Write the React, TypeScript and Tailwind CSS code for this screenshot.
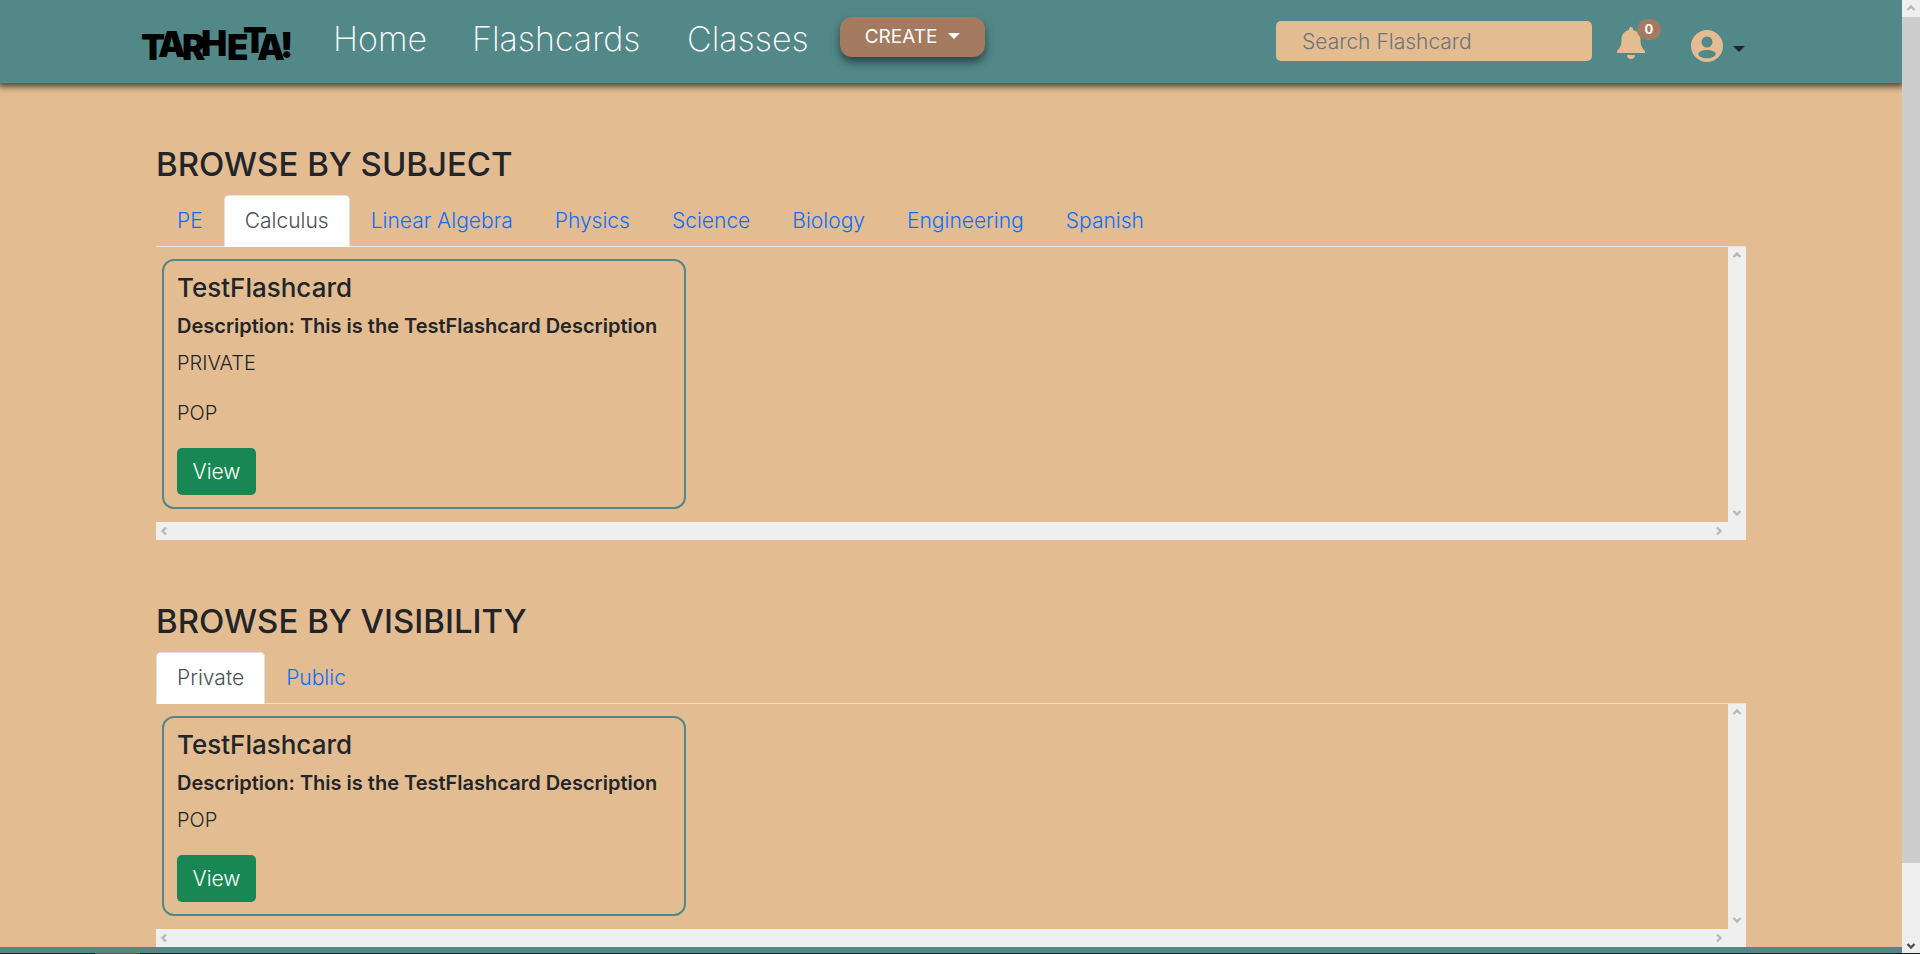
import type { ReactNode } from "react";

const chevrons = {
  up: "M1.5 6 5 2.5 8.5 6",
  down: "M1.5 3 5 6.5 8.5 3",
  left: "M6 1.5 2.5 5 6 8.5",
  right: "M3 1.5 6.5 5 3 8.5",
};

function Chevron({ dir, dark }: { dir: keyof typeof chevrons; dark?: boolean }) {
  return (
    <svg viewBox="0 0 10 10" className="size-[10px]" fill="none" stroke={dark ? "#505050" : "#b8b8b8"} strokeWidth="2.4">
      <path d={chevrons[dir]} />
    </svg>
  );
}

function Caret({ className }: { className: string }) {
  return (
    <svg viewBox="0 0 12 6" className={`h-[6px] w-3 ${className}`} fill="currentColor">
      <path d="M0 0h12L6 6z" />
    </svg>
  );
}

function Logo() {
  return (
    <a href="#home" aria-label="Tarheta home" className="mt-3 ml-[140px] block h-[60px] w-[152px] shrink-0">
      <svg viewBox="0 0 152 60" className="h-[60px] w-[152px] overflow-visible" fontFamily="Inter, sans-serif" fontWeight="900" fontSize="35">
        <text x="1 18 42 61 87 103 117 140" y="48 45 48 44 48 41 48 46">TARHETA!</text>
      </svg>
    </a>
  );
}

function Header() {
  return (
    <header className="relative z-10 flex h-[83px] shrink-0 items-start bg-[#528888] shadow-[0_2px_6px_2px_rgba(0,0,0,0.6)]">
      <Logo />
      <nav className="ml-[41px] flex gap-[46px] text-[34px] leading-[48px] font-extralight text-white">
        <a href="#home" className="mt-[15px] w-[93px]">Home</a>
        <a href="#flashcards" className="mt-[15px] w-[169px]">Flashcards</a>
        <a href="#classes" className="mt-[15px] w-[122px]">Classes</a>
      </nav>
      <button type="button" className="mt-[17px] ml-[31px] flex h-10 w-[145px] shrink-0 items-center justify-center gap-[11px] rounded-xl bg-[#a47a60] text-[19px] text-white shadow-[0_5px_8px_rgba(0,0,0,0.5)]">
        CREATE
        <Caret className="-mt-0.5" />
      </button>
      <input
        type="search"
        aria-label="Search Flashcard"
        placeholder="Search Flashcard"
        className="mt-[21px] ml-auto h-10 w-[316px] rounded-[5px] bg-[#e3bd91] px-[26px] text-[21px] font-light text-[#212529] placeholder:text-[#6c757d]"
      />
      <button type="button" aria-label="Notifications" className="relative mt-[27px] ml-[25px] h-8 w-7 shrink-0">
        <svg viewBox="0 0 28 32" className="h-8 w-7" fill="#e3bd91">
          <path d="M14 0a2 2 0 0 1 2 2v1c4.600 1 7.500 4.800 7.500 9.500 0 5.500 1 8 4.500 11.500v2H0v-2c3.500-3.500 4.500-6 4.500-11.500C4.500 7.800 7.400 4 12 3V2a2 2 0 0 1 2-2zM10 28h8c0 2.500-1.800 4-4 4s-4-1.500-4-4z" />
        </svg>
        <span className="absolute -top-2 left-5 flex h-[21px] w-6 items-center justify-center rounded-full bg-[#a47a60] text-[13px] font-bold text-white">0</span>
      </button>
      <button type="button" aria-label="Account" className="mt-[30px] mr-[157px] ml-[46px] flex h-8 shrink-0 items-center gap-[10px] text-[#212529]">
        <svg viewBox="0 0 32 32" className="size-8" fill="#e3bd91" fillRule="evenodd">
          <path d="M16 0a16 16 0 1 0 0 32 16 16 0 0 0 0-32zm0 6.500a5.500 5.500 0 1 1 0 11 5.500 5.500 0 0 1 0-11zM16 20c5 0 8.700 2 8.700 4s-3.700 4.300-8.700 4.300S7.300 26 7.300 24s3.700-4 8.700-4z" />
        </svg>
        <Caret className="mt-1.5" />
      </button>
    </header>
  );
}

function Tabs({ items, active }: { items: string[]; active: string }) {
  return (
    <div role="tablist" className="flex h-[52px] border-b border-[#dee2e6]">
      {items.map((name) => (
        <button
          key={name}
          type="button"
          role="tab"
          aria-selected={name === active}
          className={
            "-mb-px rounded-t-[5px] border px-[20px] text-[21px] font-light " +
            (name === active ? "border-[#dee2e6] border-b-white bg-white text-[#495057]" : "border-transparent text-[#0d6efd]")
          }
        >
          {name}
        </button>
      ))}
    </div>
  );
}

function ScrollPane({ children }: { children: ReactNode }) {
  return (
    <div className="grid grid-cols-[1fr_18px] grid-rows-[1fr_18px]">
      <div className="px-[6px] pt-3 pb-[13px]">{children}</div>
      <div className="row-span-2 flex flex-col items-center justify-between bg-[#efefef] pt-1 pb-[22px]">
        <Chevron dir="up" />
        <Chevron dir="down" />
      </div>
      <div className="flex items-center justify-between bg-[#efefef] px-1">
        <Chevron dir="left" />
        <Chevron dir="right" />
      </div>
    </div>
  );
}

function Flashcard({ visibility }: { visibility?: string }) {
  return (
    <article className="w-[524px] rounded-xl border-2 border-[#528888] px-[13px] pt-3 pb-3 text-[20px] leading-[30px] font-light">
      <h3 className="text-[26px] font-medium">TestFlashcard</h3>
      <h4 className="mt-[11px] leading-6 font-semibold whitespace-nowrap">Description: This is the TestFlashcard Description</h4>
      {visibility && <p className="mt-[10px] mb-5">{visibility}</p>}
      <p className="mt-[10px]">POP</p>
      <button type="button" className="mt-5 block h-[47px] w-[79px] rounded-[5px] bg-[#198754] text-[21px] font-light text-white">
        View
      </button>
    </article>
  );
}

function Section({ title, items, active, children }: { title: string; items: string[]; active: string; children: ReactNode }) {
  return (
    <section>
      <h2 className="mb-[10px] text-[33px] leading-[42px] font-medium">{title}</h2>
      <Tabs items={items} active={active} />
      <ScrollPane>{children}</ScrollPane>
    </section>
  );
}

export default function App() {
  return (
    <div className="flex h-screen flex-col overflow-hidden bg-[#e3bd91] font-[Inter,'Noto_Sans',sans-serif] text-[#212529]">
      <div className="flex min-h-0 flex-1">
        <div className="flex min-w-0 flex-1 flex-col overflow-hidden">
          <Header />
          <main className="flex shrink-0 flex-col gap-[60px] px-[156px] pt-[60px]">
            <Section
              title="BROWSE BY SUBJECT"
              items={["PE", "Calculus", "Linear Algebra", "Physics", "Science", "Biology", "Engineering", "Spanish"]}
              active="Calculus"
            >
              <Flashcard visibility="PRIVATE" />
            </Section>
            <Section title="BROWSE BY VISIBILITY" items={["Private", "Public"]} active="Private">
              <Flashcard />
            </Section>
          </main>
          <footer className="h-20 shrink-0 bg-[#528888]" />
        </div>
        <div className="flex w-[18px] shrink-0 flex-col items-center bg-[#efefef]">
          <div className="flex h-[17px] shrink-0 items-center">
            <Chevron dir="up" />
          </div>
          <div className="w-full flex-[848] bg-[#cdcdcd]" />
          <div className="flex flex-[88] items-end pb-[2px]">
            <Chevron dir="down" dark />
          </div>
        </div>
      </div>
      <div className="flex h-px shrink-0 bg-[#1c2024] pl-[95px]">
        <div className="w-[45px] bg-[#b02a30]" />
      </div>
    </div>
  );
}
